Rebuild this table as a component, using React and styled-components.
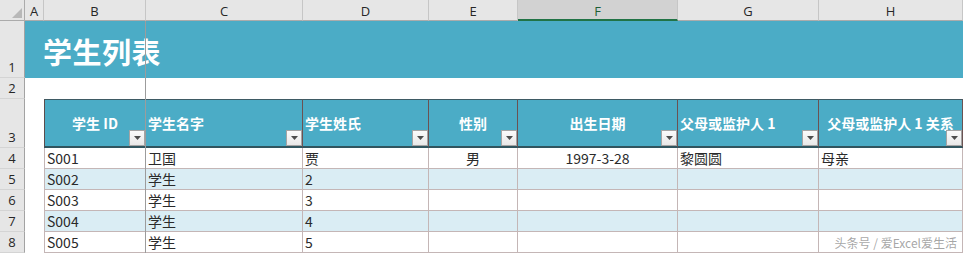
import React from "react";
import styled, { createGlobalStyle, css } from "styled-components";

const GlobalStyle = createGlobalStyle`
  html, body { margin: 0; padding: 0; background: #ffffff; }
  body { font-family: "Noto Sans CJK SC", "Noto Sans", sans-serif; }
  * { box-sizing: border-box; }
`;

const TEAL = "#4bacc6";

const Sheet = styled.div`
  position: relative;
  width: 963px;
  display: grid;
  grid-template-columns: 25px 19px 102px 157px 126px 89px 160px 141px 144px;
  grid-template-rows: 21px 57px 21px 49px repeat(5, 21px);
  background: #ffffff;
  overflow: hidden;
`;

const Corner = styled.div`
  position: relative;
  background: #e6e6e6;
  border-right: 1px solid #ababab;
  border-bottom: 1px solid #ababab;
  display: flex;
  align-items: flex-end;
  justify-content: flex-end;
  padding: 0 2px 2px 0;
`;

const ColHeader = styled.div`
  background: #e6e6e6;
  border-right: 1px solid #c6c6c6;
  border-bottom: 1px solid #ababab;
  display: flex;
  align-items: center;
  justify-content: center;
  padding-top: 2px;
  font-family: "Open Sans", "Noto Sans", sans-serif;
  font-size: 13px;
  color: #262626;
  ${(p) =>
    p.$selected &&
    css`
      background: #d2d2d2;
      color: #1e5e36;
      border-bottom: 2px solid #217346;
    `}
`;

const RowHeader = styled.div`
  background: #e6e6e6;
  border-right: 1px solid #a3a3a3;
  border-bottom: 1px solid #d4d4d4;
  display: flex;
  align-items: flex-end;
  justify-content: center;
  padding-bottom: 1px;
  font-family: "Open Sans", "Noto Sans", sans-serif;
  font-size: 13px;
  line-height: 18px;
  color: #262626;
`;

const TitleBand = styled.div`
  grid-column: 2 / -1;
  background: ${TEAL};
  display: flex;
  align-items: center;
  padding-left: 18px;
  padding-top: 2px;
  font-family: "Noto Sans CJK SC", sans-serif;
  font-weight: 700;
  font-size: 29px;
  color: #ffffff;
  letter-spacing: 0.5px;
`;

const BlankRow = styled.div`
  grid-column: 2 / -1;
  background: #ffffff;
`;

const Gutter = styled.div`
  background: #ffffff;
`;

const HeadCell = styled.div`
  position: relative;
  background: ${TEAL};
  border-top: 1px solid #3e5a64;
  border-bottom: 2px solid #30555f;
  border-right: 1px solid #6b5252;
  ${(p) => p.$first && css`border-left: 1px solid #5c4c4c;`}
  display: flex;
  align-items: center;
  justify-content: ${(p) => (p.$center ? "center" : "flex-start")};
  padding: 0 2px 0 2px;
  font-family: "Noto Sans CJK SC", sans-serif;
  font-weight: 700;
  font-size: 14px;
  color: #ffffff;
  white-space: nowrap;
`;

const FilterButton = styled.span`
  position: absolute;
  right: 0;
  bottom: 0;
  width: 16px;
  height: 16px;
  border: 1px solid #a4a4a4;
  background: linear-gradient(#fbfbfb, #e8e8e8);
  display: flex;
  align-items: center;
  justify-content: center;
`;

const DataCell = styled.div`
  background: ${(p) => (p.$alt ? "#daedf4" : "#ffffff")};
  border-right: 1px solid #c4b6b6;
  border-bottom: 1px solid #c4b6b6;
  ${(p) => p.$first && css`border-left: 1px solid #c4b6b6;`}
  display: flex;
  align-items: center;
  justify-content: ${(p) => (p.$center ? "center" : "flex-start")};
  padding: 0 2px 0 2px;
  font-family: "Noto Sans CJK SC", sans-serif;
  font-size: 14px;
  color: #2a2a2a;
  white-space: nowrap;
`;

const FreezeLine = styled.div`
  position: absolute;
  left: 145px;
  top: 21px;
  bottom: 0;
  width: 1px;
  background: #9c9c9c;
  pointer-events: none;
`;

const Watermark = styled.div`
  position: absolute;
  right: 6px;
  bottom: 2px;
  font-family: "Noto Sans CJK SC", sans-serif;
  font-size: 12px;
  color: rgba(150, 150, 150, 0.85);
  white-space: nowrap;
  pointer-events: none;
`;

const CornerMark = () => (
  <svg width="10" height="10" viewBox="0 0 10 10">
    <polygon points="10,0 10,10 0,10" fill="#b8b8b8" />
  </svg>
);

const Arrow = () => (
  <svg width="7" height="4" viewBox="0 0 7 4">
    <polygon points="0,0 7,0 3.5,4" fill="#4d4d4d" />
  </svg>
);

const letters = ["A", "B", "C", "D", "E", "F", "G", "H"];

const headers = [
  { label: "学生 ID", center: true },
  { label: "学生名字" },
  { label: "学生姓氏" },
  { label: "性别", center: true },
  { label: "出生日期", center: true },
  { label: "父母或监护人 1" },
  { label: "父母或监护人 1 关系", center: true },
];

const centerCols = [false, false, false, true, true, false, false];

const rows = [
  ["S001", "卫国", "贾", "男", "1997-3-28", "黎圆圆", "母亲"],
  ["S002", "学生", "2", "", "", "", ""],
  ["S003", "学生", "3", "", "", "", ""],
  ["S004", "学生", "4", "", "", "", ""],
  ["S005", "学生", "5", "", "", "", ""],
];

export default function App() {
  return (
    <>
      <GlobalStyle />
      <Sheet>
        <Corner>
          <CornerMark />
        </Corner>
        {letters.map((l) => (
          <ColHeader key={l} $selected={l === "F"}>
            {l}
          </ColHeader>
        ))}

        <RowHeader>1</RowHeader>
        <TitleBand>学生列表</TitleBand>

        <RowHeader>2</RowHeader>
        <BlankRow />

        <RowHeader>3</RowHeader>
        <Gutter />
        {headers.map((h, i) => (
          <HeadCell key={h.label} $center={h.center} $first={i === 0}>
            {h.label}
            <FilterButton>
              <Arrow />
            </FilterButton>
          </HeadCell>
        ))}

        {rows.map((r, ri) => (
          <React.Fragment key={ri}>
            <RowHeader>{ri + 4}</RowHeader>
            <Gutter />
            {r.map((v, ci) => (
              <DataCell
                key={ci}
                $alt={ri % 2 === 1}
                $first={ci === 0}
                $center={centerCols[ci]}
              >
                {v}
              </DataCell>
            ))}
          </React.Fragment>
        ))}

        <FreezeLine />
        <Watermark>头条号 / 爱Excel爱生活</Watermark>
      </Sheet>
    </>
  );
}
